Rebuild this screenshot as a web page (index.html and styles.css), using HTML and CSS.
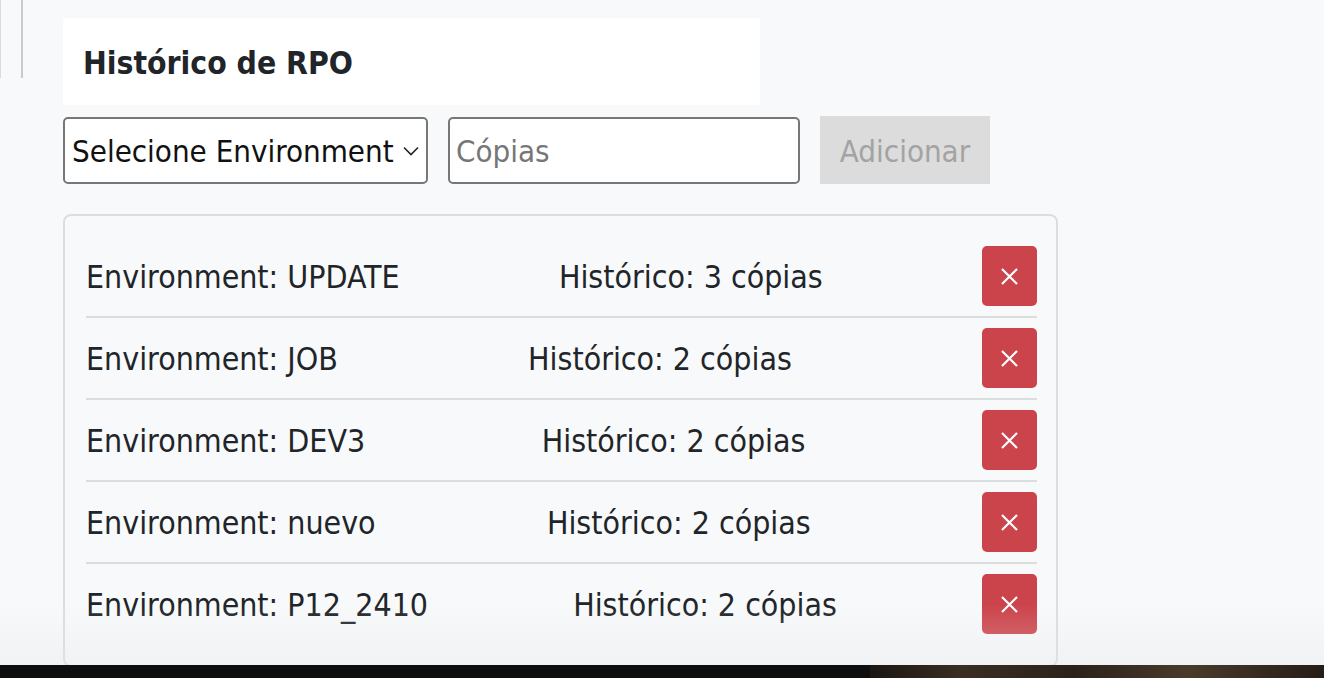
FILE: index.html
```html
<!DOCTYPE html>
<html lang="pt">
<head>
<meta charset="utf-8">
<title>Histórico de RPO</title>
<link rel="stylesheet" href="styles.css">
</head>
<body>
<div class="viewport">
  <div class="layout">
    <div class="rail"></div>
    <main class="main">
      <div class="title-card"><h1>Histórico de RPO</h1></div>
      <form class="controls">
        <div class="select-wrap">
          <select class="select">
            <option>Selecione Environment</option>
          </select>
          <svg class="chevron" viewBox="0 0 16 10" width="16" height="10"><path d="M1 1.5 L8 8.5 L15 1.5" fill="none" stroke="#222" stroke-width="1.6"/></svg>
        </div>
        <input class="input" type="text" placeholder="Cópias">
        <button type="button" class="add-btn" disabled>Adicionar</button>
      </form>
      <ul class="list">
        <li class="row"><span>Environment: UPDATE</span><span>Histórico: 3 cópias</span><button class="del" type="button" aria-label="Remover"><svg viewBox="0 0 17 17" width="17" height="17"><path d="M1 1 L16 16 M16 1 L1 16" stroke="#fff" stroke-width="2.2" fill="none"/></svg></button></li>
        <li class="row"><span>Environment: JOB</span><span>Histórico: 2 cópias</span><button class="del" type="button" aria-label="Remover"><svg viewBox="0 0 17 17" width="17" height="17"><path d="M1 1 L16 16 M16 1 L1 16" stroke="#fff" stroke-width="2.2" fill="none"/></svg></button></li>
        <li class="row"><span>Environment: DEV3</span><span>Histórico: 2 cópias</span><button class="del" type="button" aria-label="Remover"><svg viewBox="0 0 17 17" width="17" height="17"><path d="M1 1 L16 16 M16 1 L1 16" stroke="#fff" stroke-width="2.2" fill="none"/></svg></button></li>
        <li class="row"><span>Environment: nuevo</span><span>Histórico: 2 cópias</span><button class="del" type="button" aria-label="Remover"><svg viewBox="0 0 17 17" width="17" height="17"><path d="M1 1 L16 16 M16 1 L1 16" stroke="#fff" stroke-width="2.2" fill="none"/></svg></button></li>
        <li class="row"><span>Environment: P12_2410</span><span>Histórico: 2 cópias</span><button class="del" type="button" aria-label="Remover"><svg viewBox="0 0 17 17" width="17" height="17"><path d="M1 1 L16 16 M16 1 L1 16" stroke="#fff" stroke-width="2.2" fill="none"/></svg></button></li>
      </ul>
    </main>
  </div>
  <div class="fade"></div>
</div>
<div class="strip"><div class="strip-photo"></div></div>
</body>
</html>
```
FILE: styles.css
```css
* { box-sizing: border-box; }
html, body { margin: 0; padding: 0; }
body {
  background: #f8f9fa;
  font-family: "DejaVu Sans Condensed", "DejaVu Sans", sans-serif;
  font-stretch: semi-condensed;
  color: #212529;
  overflow: hidden;
}
.viewport {
  position: relative;
  height: 665px;
  overflow: hidden;
}
.layout {
  display: flex;
  align-items: flex-start;
}
.rail {
  width: 23px;
  height: 78px;
  border-left: 1px solid #dcdcdc;
  border-right: 2px solid #c9cacc;
  flex: none;
}
.main {
  margin-left: 40px;
  padding-top: 18px;
  width: 995px;
}
.title-card {
  background: #fff;
  width: 697px;
  height: 87px;
  padding: 2px 21px 0 20px;
  display: flex;
  align-items: center;
}
.title-card h1 {
  margin: 0;
  font-size: 31.6px;
  font-weight: bold;
  color: #212529;
}
.controls {
  display: flex;
  align-items: center;
  margin-top: 11px;
  gap: 20px;
}
.select-wrap {
  position: relative;
  width: 365px;
  height: 67px;
}
.select {
  appearance: none;
  -webkit-appearance: none;
  width: 100%;
  height: 100%;
  border: 2px solid #777;
  border-radius: 5px;
  background: #fff;
  font-family: inherit;
  font-stretch: inherit;
  font-size: 31px;
  color: #111;
  padding: 2px 0 0 7px;
}
.chevron {
  position: absolute;
  right: 9px;
  top: 29px;
  pointer-events: none;
}
.input {
  width: 352px;
  height: 67px;
  border: 2px solid #777;
  border-radius: 5px;
  background: #fff;
  font-family: inherit;
  font-stretch: inherit;
  font-size: 31px;
  padding: 2px 0 0 6px;
}
.input::placeholder { color: #777; }
.add-btn {
  width: 170px;
  height: 68px;
  border: none;
  border-radius: 0;
  background: #dcdcdc;
  color: #a3a3a3;
  font-family: inherit;
  font-stretch: inherit;
  font-size: 31px;
  padding: 2px 0 0;
}
.list {
  list-style: none;
  margin: 30px 0 0;
  padding: 20px 19px 21px 21px;
  border: 2px solid #dcdddf;
  border-radius: 8px;
  width: 995px;
}
.row {
  display: flex;
  justify-content: space-between;
  align-items: center;
  padding: 10px 0;
  border-bottom: 2px solid #dcdddf;
  font-size: 31.8px;
}
.row:last-child { border-bottom: none; }
.row span { padding-top: 1px; }
.del {
  width: 55px;
  height: 60px;
  border: none;
  border-radius: 5px;
  background: #cc444b;
  padding: 0;
  display: flex;
  align-items: center;
  justify-content: center;
}
.fade {
  position: absolute;
  left: 0;
  right: 0;
  bottom: 0;
  height: 60px;
  background: linear-gradient(to bottom, rgba(228,229,232,0), rgba(228,229,232,0.35));
  pointer-events: none;
}
.strip {
  height: 13px;
  background: #0e0e0e;
  position: relative;
  overflow: hidden;
}
.strip-photo {
  position: absolute;
  left: 870px;
  top: 0;
  width: 454px;
  height: 13px;
  background: linear-gradient(90deg, #1a1612, #3a2e22 20%, #2a2219 45%, #4a3a2a 70%, #251d16);
}
```
